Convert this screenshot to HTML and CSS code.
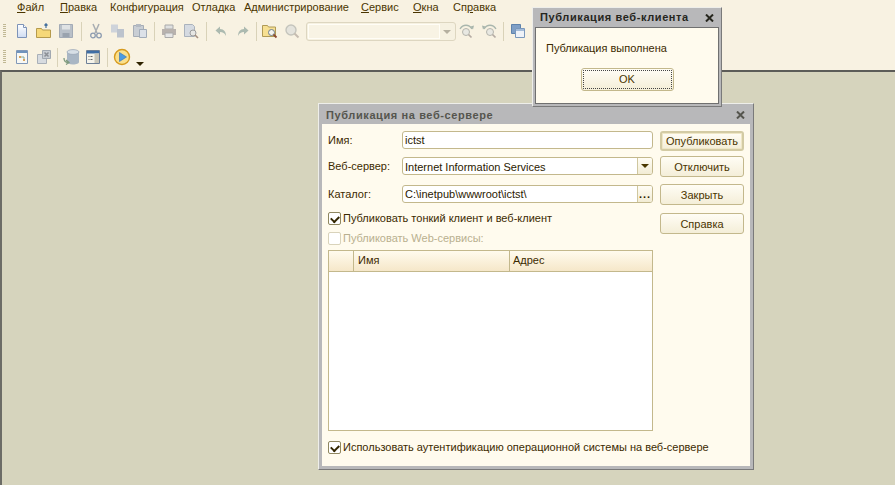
FILE: index.html
```html
<!DOCTYPE html>
<html lang="ru">
<head>
<meta charset="utf-8">
<title>Конфигуратор</title>
<link rel="stylesheet" href="styles.css">
</head>
<body>
<div class="app">
  <nav class="menu">
    <span><u>Ф</u>айл</span><span><u>П</u>равка</span><span>Конфигурация</span><span>Отладка</span><span>Администрирование</span><span><u>С</u>ервис</span><span><u>О</u>кна</span><span>Сп<u>р</u>авка</span>
  </nav>
  <div class="bar bar1">
    <i class="grip"></i>
    <span class="b"><svg width="16" height="16" viewBox="0 0 16 16"><defs><linearGradient id="dg" x1="0" y1="0" x2="0" y2="1"><stop offset="0" stop-color="#fff"/><stop offset="1" stop-color="#cfdcf2"/></linearGradient></defs><path d="M3.500 1.500h6l3 3v10h-9z" fill="url(#dg)" stroke="#7d93b8"/><path d="M9.500 1.500v3h3" fill="#fff" stroke="#7d93b8"/></svg></span>
    <span class="b"><svg width="16" height="16" viewBox="0 0 16 16"><path d="M.5 5.500h5l1 1.500h8v7.500h-14z" fill="#f6d878" stroke="#b59a4c"/><path d="M10 5V1M8.500 2.500 10 .8l1.500 1.700" fill="none" stroke="#45709e" stroke-width="1.200"/></svg></span>
    <span class="b off"><svg width="16" height="16" viewBox="0 0 16 16"><path d="M1.500 1.500h13v13h-13z" fill="#b9c0c8" stroke="#a3abb6"/><path d="M4 2h8v4.500H4z" fill="#dfe2e4"/><path d="M4.500 10h7v4h-7z" fill="#9aa3ae"/></svg></span>
    <i class="sep"></i>
    <span class="b off"><svg width="16" height="16" viewBox="0 0 16 16"><path d="M5 1l4 9M11 1L7 10" stroke="#a8adb2" stroke-width="1.500" fill="none"/><circle cx="5" cy="12.500" r="2.300" fill="none" stroke="#8d9cb0" stroke-width="1.300"/><circle cx="11" cy="12.500" r="2.300" fill="none" stroke="#8d9cb0" stroke-width="1.300"/></svg></span>
    <span class="b off"><svg width="16" height="16" viewBox="0 0 16 16"><path d="M1 1.500h7v8H1z" fill="#ced3da"/><path d="M7 6h7v8.500H7z" fill="#bcc3cd"/></svg></span>
    <span class="b off"><svg width="16" height="16" viewBox="0 0 16 16"><path d="M1.500 2.500h10v11h-10z" fill="#c9ced4" stroke="#a6adb6"/><path d="M4 1h5v3H4z" fill="#b4bac2"/><path d="M7.500 6.500h7v8h-7z" fill="#dce1e8" stroke="#a2acb9"/></svg></span>
    <i class="sep sep-7"></i>
    <span class="b off"><svg width="16" height="16" viewBox="0 0 16 16"><path d="M4 2h8v4H4z" fill="#dfe0e0" stroke="#aaa"/><path d="M1 6h14v6H1z" fill="#b8b2ae"/><path d="M4 10h8v4.500H4z" fill="#e6e6e6" stroke="#aaa"/></svg></span>
    <span class="b off"><svg width="16" height="16" viewBox="0 0 16 16"><path d="M1.500 1.500h8l2 2v10h-10z" fill="#d5dae1" stroke="#aab2bc"/><circle cx="10" cy="10" r="3" fill="#e7e7e4" stroke="#9d9d9d"/><path d="M12 12l3 3" stroke="#a58f80" stroke-width="1.600"/></svg></span>
    <i class="sep"></i>
    <span class="b off"><svg width="16" height="16" viewBox="0 0 16 16"><path d="M7 3.500 2.500 7.500 7 11.500V9c3 0 4.500 1 6 4 0-4-2-7-6-7z" fill="#acbab0"/></svg></span>
    <span class="b off"><svg width="16" height="16" viewBox="0 0 16 16"><path d="M9 3.500l4.500 4L9 11.500V9c-3 0-4.500 1-6 4 0-4 2-7 6-7z" fill="#acbab0"/></svg></span>
    <i class="sep sep-5"></i>
    <span class="b"><svg width="16" height="16" viewBox="0 0 16 16"><path d="M.5 2.500h5l1 1.500h7v9.500H.5z" fill="#f7e092" stroke="#b09a55"/><circle cx="9.500" cy="9.500" r="3" fill="#f3f3ee" stroke="#6e7c8a"/><path d="M11.500 11.500l3 3" stroke="#8c4a34" stroke-width="1.800"/></svg></span>
    <span class="b off"><svg width="16" height="16" viewBox="0 0 16 16"><circle cx="7" cy="7" r="5" fill="#e4e3dc" stroke="#c4c4bc" stroke-width="1.400"/><path d="M10.500 10.500l4 4" stroke="#c6bcb0" stroke-width="2"/></svg></span>
    <span class="combo"><span class="combo-in"></span><span class="combo-arrow"></span></span>
    <span class="b off"><svg width="18" height="16" viewBox="0 0 18 16"><circle cx="8" cy="9" r="3.500" fill="#e8e8e2" stroke="#b5b5ad"/><path d="M10.500 11.500l3 3" stroke="#b5aca4" stroke-width="1.700"/><path d="M2 6c3-5 9-5 12 0" fill="none" stroke="#a9b6ad" stroke-width="1.300"/><path d="M12.500 3.500 15 6.500l1-4z" fill="#a9b6ad"/></svg></span>
    <span class="b off"><svg width="18" height="16" viewBox="0 0 18 16"><circle cx="10" cy="9" r="3.500" fill="#e8e8e2" stroke="#b5b5ad"/><path d="M12.500 11.500l3 3" stroke="#b5aca4" stroke-width="1.700"/><path d="M16 6C13 1 7 1 4 6" fill="none" stroke="#a9b6ad" stroke-width="1.300"/><path d="M5.500 3.500 3 6.500l-1-4z" fill="#a9b6ad"/></svg></span>
    <i class="sep sep-7"></i>
    <span class="b"><svg width="16" height="16" viewBox="0 0 16 16"><path d="M1.500 1.500h9v9h-9z" fill="#7f9fc6" stroke="#5f83ac"/><path d="M5.500 5.500h9v9h-9z" fill="#eef2f8" stroke="#7a98bc"/><path d="M6 6h8v2H6z" fill="#a3bbd8"/></svg></span>
    <i class="sep"></i>
  </div>
  <div class="bar bar2">
    <i class="grip"></i>
    <span class="b"><svg width="16" height="16" viewBox="0 0 16 16"><path d="M2.500 1.500h11v13h-11z" fill="#f8f8f4" stroke="#8198b8"/><path d="M3 2h10v2H3z" fill="#6f93bc"/><path d="M5 7h2v2H5zM9 10h2v2H9z" fill="#d9a25a"/><path d="M7 8h3v2" fill="none" stroke="#8a9"/></svg></span>
    <span class="b off"><svg width="16" height="16" viewBox="0 0 16 16"><path d="M1.500 5.500h9v9h-9z" fill="#d7dbe0" stroke="#a9b0b8"/><path d="M6.500 1.500h8v8h-8z" fill="#c7ccd2" stroke="#a1a8b1"/><path d="M8.500 3.500l4 4m0-4l-4 4" stroke="#8b8f96" stroke-width="1.500"/></svg></span>
    <i class="sep sep-5"></i>
    <span class="b"><svg width="17" height="16" viewBox="0 0 17 16"><path d="M4 3v10c0 1.500 2.500 2.500 6 2.500s6-1 6-2.500V3z" fill="#a9b6c4"/><ellipse cx="10" cy="3" rx="6" ry="2.400" fill="#d7dfe6" stroke="#93a1b1" stroke-width=".7"/><path d="M1 9c0 3 1.500 4.500 4 4.500M3 15.500 6 13.500 3 11" fill="none" stroke="#7f9a7f" stroke-width="1.300"/></svg></span>
    <span class="b"><svg width="16" height="16" viewBox="0 0 16 16"><path d="M1.500 1.500h13v13h-13z" fill="#f5f3ea" stroke="#6d7f97"/><path d="M2 2h12v2.500H2z" fill="#3f6ea5"/><path d="M9.500 4.500h4.500v9.500H9.500z" fill="#c9c6b8"/><path d="M3.500 7h1v1h-1zm2 0h2v1h-2zm-2 3h1v1h-1zm2 0h2v1h-2z" fill="#6a6a6a"/></svg></span>
    <i class="sep sep-7"></i>
    <span class="b"><svg width="18" height="18" viewBox="0 0 18 18"><circle cx="9" cy="9" r="7.500" fill="#fbe08c" stroke="#d69a1e" stroke-width="1.400"/><path d="M6.500 4.500v9L13.500 9z" fill="#4d9be0" stroke="#2f6fb4" stroke-width=".6"/></svg></span>
    <i class="drop"></i>
  </div>
  <main class="desk">
    <section class="win win-pub">
      <header class="title"><span>Публикация на веб-сервере</span><svg class="x" width="9" height="8" viewBox="0 0 9 8"><path d="M1 .5l7 7m0-7l-7 7" stroke="currentColor" stroke-width="2"/></svg></header>
      <div class="body pub-body">
        <div class="pub-left">
          <div class="row"><label>Имя:</label><span class="field">ictst</span></div>
          <div class="row r2"><label>Веб-сервер:</label><span class="field">Internet Information Services<span class="fbtn"><i class="tri"></i></span></span></div>
          <div class="row"><label>Каталог:</label><span class="field">C:\inetpub\wwwroot\ictst\<span class="fbtn dots">...</span></span></div>
          <div class="chk-row"><i class="chk on"></i>Публиковать тонкий клиент и веб-клиент</div>
          <div class="chk-row dis"><i class="chk"></i>Публиковать Web-сервисы:</div>
          <div class="grid">
            <div class="grid-head"><span class="c0"></span><span class="c1">Имя</span><span class="c2">Адрес</span></div>
          </div>
          <div class="chk-row last"><i class="chk on"></i><span class="nowrap">Использовать аутентификацию операционной системы на веб-сервере</span></div>
        </div>
        <div class="pub-right">
          <button class="btn def">Опубликовать</button>
          <button class="btn">Отключить</button>
          <button class="btn">Закрыть</button>
          <button class="btn">Справка</button>
        </div>
      </div>
    </section>
  </main>
  <section class="win win-msg">
    <header class="title"><span>Публикация веб-клиента</span><svg class="x" width="9" height="8" viewBox="0 0 9 8"><path d="M1 .5l7 7m0-7l-7 7" stroke="currentColor" stroke-width="2"/></svg></header>
    <div class="body msg-body">
      <p>Публикация выполнена</p>
      <button class="btn focus">OK</button>
    </div>
  </section>
</div>
</body>
</html>
```
FILE: styles.css
```css
* { box-sizing: border-box; }
html, body { margin: 0; height: 100%; }
body { font: 11px/13px "Liberation Sans", Arial, sans-serif; color: #3c2a00; overflow: hidden; }
.app { position: relative; width: 895px; height: 485px; display: flex; flex-direction: column; background: #f8f2e2; }

.menu { height: 18px; flex: none; display: grid; grid-template-columns: 43px 50px 82px 52px 117px 52px 40px auto; justify-content: start; align-items: center; padding: 0 0 4px 17px; white-space: nowrap; color: #4a3500; }

.bar { display: flex; align-items: center; padding-left: 3px; flex: none; }
.bar1 { height: 26px; }
.bar2 { height: 26px; }
.grip { width: 3px; height: 14px; margin-right: 5px; background: repeating-linear-gradient(#c0b894 0 1px, transparent 1px 2px); }
.b { width: 22px; height: 20px; display: flex; align-items: center; justify-content: center; }
.sep { width: 8px; height: 19px; display: block; background: linear-gradient(#d9d2b8, #d9d2b8) center / 1px 100% no-repeat; }
.sep-7 { width: 7px; }
.sep-5 { width: 5px; }
.combo { width: 150px; height: 19px; margin-left: 3px; display: flex; border: 1px solid #ddd6c0; border-radius: 3px; background: #f6f1e1; }
.combo-in { flex: 1; margin: 1px 0 1px 1px; background: #f8f3e4; border: 1px solid #fffdf6; }
.combo-arrow { width: 15px; position: relative; }
.combo-arrow::after { content: ""; position: absolute; left: 3px; top: 7px; border: 4px solid transparent; border-top-color: #b5b0a0; border-bottom: 0; }
.drop { margin: 13px 0 0 3px; border: 4px solid transparent; border-top-color: #2e2200; border-bottom: 0; }

.desk { position: relative; flex: 1; background: #d6d4bd; border-top: 2px solid #5c5c58; border-left: 2px solid #6c6c66; }

.win { position: absolute; display: flex; flex-direction: column; background: #b8b8ba; border: 1px solid #eeeeea; border-right-color: #7a7a7a; border-bottom-color: #7a7a7a; }
.win-pub { left: 316px; top: 31px; width: 436px; height: 367px; padding: 0 3px 3px; }
.win-msg { left: 532px; top: 7px; width: 190px; height: 100px; padding: 0 2px 2px; }
.title { height: 20px; flex: none; display: flex; align-items: center; justify-content: space-between; font-weight: 700; letter-spacing: .6px; white-space: nowrap; }
.win-msg .title { color: #26261e; border-bottom: 1px solid #707070; padding: 0 5px; }
.win-pub .title { color: #55554e; padding: 2px 5px 0 4px; }
.body { flex: 1; background: #fffbee; }

.msg-body { display: flex; flex-direction: column; align-items: center; border: 1px solid #707070; border-top: 0; }
.msg-body p { margin: 14px 0 0; width: 100%; padding-left: 10px; }
.msg-body .btn { margin-top: 13px; width: 93px; height: 23px; }

.pub-body { display: flex; padding: 7px 6px 0; }
.pub-left { width: 325px; display: flex; flex-direction: column; }
.pub-right { margin-left: 7px; width: 84px; display: flex; flex-direction: column; }
.pub-right .btn:nth-child(2) { margin-top: 5px; }
.pub-right .btn:nth-child(3) { margin-top: 7px; }
.pub-right .btn:nth-child(4) { margin-top: 8px; }
.row { display: flex; align-items: center; height: 18px; margin-bottom: 8px; }
.row.r2 { margin-bottom: 10px; }
.r2 label { padding-top: 1px; }
.row label { width: 74px; flex: none; }
.field { position: relative; flex: 1; height: 18px; background: #fff; border: 1px solid #c3b88c; border-radius: 3px; padding: 2px 0 0 2px; color: #2a2000; white-space: nowrap; }
.r2 .field { padding-top: 3px; }
.fbtn { position: absolute; right: 0; top: 0; bottom: 0; width: 15px; background: linear-gradient(#fffdf5, #f2ecd4); border-left: 1px solid #cfc79f; border-radius: 0 2px 2px 0; }
.tri { position: absolute; left: 3px; top: 6px; border: 4px solid transparent; border-top-color: #4a3800; border-bottom: 0; }
.dots { text-align: center; line-height: 16px; font-weight: 700; letter-spacing: 1px; }
.chk-row { display: flex; align-items: center; height: 14px; white-space: nowrap; margin-bottom: 6px; }
.chk-row.dis { color: #b9b08f; margin-bottom: 5px; }
.chk-row.dis .chk { border-color: #d9d3bb; }
.chk-row.last { margin: 9px 0 0; }
.chk { position: relative; width: 13px; height: 13px; margin-right: 2px; flex: none; border: 1px solid #8f8760; border-radius: 2px; background: #fff; }
.chk.on::after { content: ""; position: absolute; left: 2px; top: 1px; width: 6px; height: 4px; transform: rotate(-45deg) translate(-1px, 1px); border-left: 2px solid #332600; border-bottom: 2px solid #332600; }
.grid { flex: none; height: 181px; border: 1px solid #c3b88c; background: #fff; }
.grid-head { display: flex; height: 21px; background: linear-gradient(#fffbee, #f5e7c9); border-bottom: 1px solid #c3b88c; }
.grid-head span { display: block; padding: 3px 0 0 4px; border-right: 1px solid #c3b88c; }
.c0 { width: 25px; }
.c1 { width: 156px; }
.c2 { flex: 1; padding-left: 3px !important; border-right: 0 !important; }
.nowrap { white-space: nowrap; }

.btn { font: inherit; color: #4a3500; height: 21px; padding: 1px 0 0; border: 1px solid #c3b88c; border-radius: 3px; background: linear-gradient(#fffdf5, #f4eed8); }
.btn.def { height: 20px; padding: 0; border-width: 2px; border-color: #d3cba4; box-shadow: inset 0 0 0 1px #efe7c6; }
.btn.focus { padding: 0; outline: 1px dotted #444; outline-offset: -3px; }
```
